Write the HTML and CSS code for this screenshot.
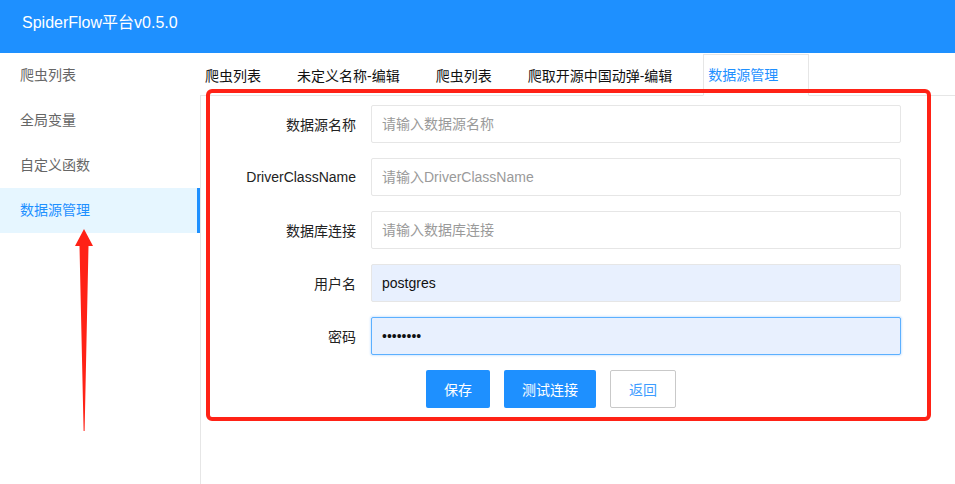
FILE: index.html
```html
<!DOCTYPE html>
<html lang="zh-CN">
<head>
<meta charset="utf-8">
<title>SpiderFlow</title>
<link rel="stylesheet" href="styles.css">
</head>
<body>
<header class="header"><span class="brand">SpiderFlow平台v0.5.0</span></header>
<div class="body">
  <nav class="side">
    <ul class="menu">
      <li class="menu-item">爬虫列表</li>
      <li class="menu-item">全局变量</li>
      <li class="menu-item">自定义函数</li>
      <li class="menu-item active">数据源管理</li>
    </ul>
  </nav>
  <main class="main">
    <ul class="tabs">
      <li class="tab">爬虫列表</li>
      <li class="tab">未定义名称-编辑</li>
      <li class="tab">爬虫列表</li>
      <li class="tab">爬取开源中国动弹-编辑</li>
      <li class="tab tab-active">数据源管理</li>
    </ul>
    <div class="panel">
      <form class="form">
        <div class="row"><label class="label">数据源名称</label><input class="input" type="text" placeholder="请输入数据源名称"></div>
        <div class="row"><label class="label">DriverClassName</label><input class="input" type="text" placeholder="请输入DriverClassName"></div>
        <div class="row"><label class="label">数据库连接</label><input class="input" type="text" placeholder="请输入数据库连接"></div>
        <div class="row"><label class="label">用户名</label><input class="input autofill" type="text" value="postgres"></div>
        <div class="row"><label class="label">密码</label><input class="input autofill focused" type="password" value="12345678"></div>
        <div class="btns">
          <button type="button" class="btn btn-blue">保存</button>
          <button type="button" class="btn btn-blue">测试连接</button>
          <button type="button" class="btn btn-plain">返回</button>
        </div>
      </form>
    </div>
  </main>
</div>
<div class="mark-box"></div>
<svg class="mark-arrow" width="30" height="210" viewBox="0 0 30 210">
  <polygon points="14,0 23,17 18.5,17 14.6,202 13.6,202 9.5,17 5,17" fill="#ff2216"/>
</svg>
</body>
</html>
```
FILE: styles.css
```css
* { box-sizing: border-box; margin: 0; padding: 0; }
html, body { width: 955px; height: 484px; overflow: hidden; background: #fff; }
body {
  font-family: "Liberation Sans", "Noto Sans CJK SC", sans-serif;
  font-size: 14px;
  color: #333;
  position: relative;
}
.header {
  height: 53px;
  background: #1e90ff;
  padding-left: 22px;
  line-height: 46px;
  color: #fff;
  font-size: 16px;
}
.body { display: flex; height: 431px; }
.side { width: 200px; flex: none; }
.menu { list-style: none; }
.menu-item {
  height: 45px;
  line-height: 45px;
  padding-left: 20px;
  color: #666;
}
.menu-item.active {
  background: #e6f6ff;
  color: #1e90ff;
  border-right: 3px solid #1e90ff;
}
.main { flex: 1; display: flex; flex-direction: column; }
.tabs {
  list-style: none;
  display: flex;
  align-items: flex-end;
  padding-top: 1px;
  border-bottom: 1px solid #e6e6e6;
  height: 43px;
}
.tab {
  height: 41px;
  line-height: 40px;
  padding: 0 30px 0 4px;
  border: 1px solid transparent;
  border-bottom: none;
  margin-bottom: -1px;
  color: #111;
  white-space: nowrap;
}
.tab-active {
  border-color: #e6e6e6;
  background: #fff;
  height: 42px;
  border-bottom: 1px solid #fff;
  color: #1e90ff;
}
.panel { flex: 1; border-left: 1px solid #e6e6e6; padding-top: 9px; }
.form { display: flex; flex-direction: column; gap: 15px; }
.row { display: flex; align-items: center; height: 38px; }
.label {
  width: 170px;
  padding-right: 15px;
  text-align: right;
  color: #222;
}
.input {
  width: 530px;
  height: 38px;
  border: 1px solid #e6e6e6;
  border-radius: 2px;
  padding-left: 10px;
  font-family: "Liberation Sans", "Noto Sans CJK SC", sans-serif;
  font-size: 14px;
  color: #111;
  background: #fff;
  outline: none;
}
.input::placeholder { color: #9a9a9a; }
.autofill { background: #e8f0fe; }
.focused { border-color: #5cb0ff; box-shadow: 0 0 2px 1px #d6e9ff; }
.btns { display: flex; gap: 14px; padding-left: 225px; }
.btn {
  height: 38px;
  padding: 0 18px;
  border-radius: 2px;
  font-family: "Liberation Sans", "Noto Sans CJK SC", sans-serif;
  font-size: 14px;
  border: none;
}
.btn-blue { background: #1e90ff; color: #fff; }
.btn-plain { background: #fff; color: #3d9cff; border: 1px solid #c9c9c9; }
.mark-box {
  position: absolute;
  left: 206px;
  top: 89px;
  width: 725px;
  height: 332px;
  border: 4px solid #ff2216;
  border-radius: 6px;
}
.mark-arrow { position: absolute; left: 70px; top: 229px; }
```
